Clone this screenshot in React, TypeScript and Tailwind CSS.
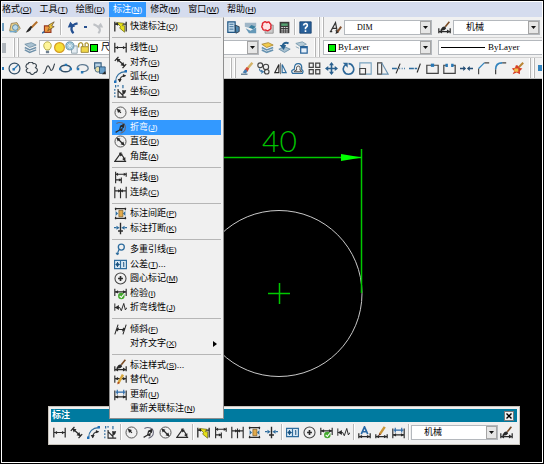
import type { ReactNode } from "react";

const K = "#2a2a2a";
const B = "#2f6d9e";

// All icons share a 16x16 grid
const icons: Record<string, ReactNode> = {
  linear: (
    <>
      <path d="M1 2v12M15 2v12M1 8h14" stroke={K} strokeWidth="1.5" />
      <path d="M1.5 8l3.5-2v4zM14.5 8L11 6v4z" fill={K} />
    </>
  ),
  aligned: (
    <>
      <path d="M1 6l4.5-5M10.5 15l4.5-5M4 4l9 8" stroke={K} strokeWidth="1.6" />
      <path d="M3 3l5 1-3.5 4zM13 12.5l-5-1 3.5-4z" fill={K} />
    </>
  ),
  arc: (
    <>
      <path d="M2 14C2 7 7 2 14 2" stroke={B} strokeWidth="1.4" />
      <path d="M7 14c0-4 3-7 7-7" stroke={K} strokeWidth="1.6" />
      <path d="M15 7l-4-2v4zM7 15l-2.5-4h5z" fill={K} />
      <path d="M0 13h3v3H0zM13 0h3v3h-3z" fill="#1f6fb8" />
    </>
  ),
  ordinate: (
    <>
      <path d="M5 5v10h10M5 7l5 5 4-4M11 6v9" stroke={K} strokeWidth="1.4" />
      <path d="M15 6l-5 1 3 4z" fill={K} />
      <path d="M1 5v2m0 2v2m0 2v2M4 1h2M11 0v4M2 0v3" stroke={B} strokeWidth="1.5" />
    </>
  ),
  radius: (
    <>
      <circle cx="8" cy="8" r="6.8" stroke="#555" strokeWidth="1.2" />
      <path d="M8.5 8.5L5 5" stroke={K} strokeWidth="1.6" />
      <path d="M3.5 3.5l5 1.5L5 8.5z" fill={K} />
    </>
  ),
  jogged: (
    <>
      <path d="M3 3c5-3 11 0 11 5 0 4-3 6-6 7" stroke="#667" strokeWidth="1.3" />
      <path d="M2 14l5-3 1-4 3-2" stroke={K} strokeWidth="1.5" />
      <path d="M13 3l-1 6-5-3zM11 8l-1 5-4-2z" fill={K} />
    </>
  ),
  diameter: (
    <>
      <circle cx="8" cy="8" r="6.8" stroke="#555" strokeWidth="1.2" />
      <path d="M4 4l8 8" stroke={K} strokeWidth="1.6" />
      <path d="M3 3l5 1.5L4.5 8zM13 13l-5-1.5L11.5 8z" fill={K} />
    </>
  ),
  angular: (
    <>
      <path d="M15 14H1L9 3M7 5c3 1 5 4 6 7" stroke={K} strokeWidth="1.4" />
      <path d="M6 3l5 2-3 3zM14 14l-4-3 4-2z" fill={K} />
    </>
  ),
  quick: (
    <>
      <path d="M1 2v12M15 2v12M1 5h14" stroke={K} strokeWidth="1.6" />
      <path d="M3 3l9 1-2 3h3v8L7 10l1-2z" fill="#e5df17" stroke="#62600c" strokeWidth=".8" />
      <path d="M1 5l4-2v4z" fill={K} />
    </>
  ),
  baseline: (
    <>
      <path d="M2 1v14M9 8v7M15 2v5M2 4h13M2 11h7" stroke={K} strokeWidth="1.4" />
      <path d="M2 4l3-2v4zM15 4l-3-2v4zM9 11l-3-2v4z" fill={K} />
    </>
  ),
  continued: (
    <>
      <path d="M1 1v14M8 3v12M15 1v14M1 6h14" stroke={K} strokeWidth="1.4" />
      <path d="M8 6L5 4v4zM8 6l3-2v4z" fill={K} />
    </>
  ),
  space: (
    <>
      <path d="M1 2h14M1 14h14M2 1v3M14 1v3M2 12v3M14 12v3" stroke={K} strokeWidth="1.5" />
      <path d="M2 5l3 3-3 3zM14 5l-3 3 3 3z" fill={B} />
      <path d="M6 4h5v8H6z" fill="#e2aa4b" stroke="#6f531e" strokeWidth=".8" />
    </>
  ),
  break: (
    <>
      <path d="M8 1v14M5 11h6" stroke={K} strokeWidth="1.7" />
      <path d="M0 7h3M13 7h3" stroke={B} strokeWidth="1.5" />
      <path d="M7 7L3 4.5v5zM9 7l4-2.5v5z" fill={B} />
    </>
  ),
  leader: (
    <>
      <circle cx="9" cy="5" r="3.7" stroke={B} strokeWidth="1.6" />
      <path d="M6 8l-2 6M2.5 12L4 14l2-1" stroke={B} strokeWidth="1.5" />
    </>
  ),
  tolerance: (
    <>
      <path d="M.7 3h14.6v10H.7zM8 3v10" fill="#d9e9f5" stroke={B} strokeWidth="1.4" />
      <circle cx="4.3" cy="8" r="1.7" stroke="#174f7d" />
      <path d="M2 8h5M4.3 5v6M11 6l1-.5V11" stroke="#174f7d" strokeWidth="1.2" />
    </>
  ),
  center: (
    <>
      <circle cx="8" cy="8" r="6.8" stroke="#444" strokeWidth="1.3" />
      <path d="M8 5v6M5 8h6" stroke={K} strokeWidth="2" />
    </>
  ),
  inspect: (
    <>
      <path d="M1 2v9M15 2v9M1 6h14" stroke={K} strokeWidth="1.4" />
      <path d="M1 6l4-2v4zM15 6l-4-2v4z" fill={K} />
      <circle cx="9" cy="11" r="4" fill="#43a82d" />
      <path d="M7 11l2 2 3-4" stroke="white" strokeWidth="1.3" />
    </>
  ),
  jogline: (
    <>
      <path d="M1 3v9M1 8h6l2 4 3-9 2 8 2-3" stroke={K} strokeWidth="1.2" />
      <path d="M1 8l5-3v6z" fill={K} />
    </>
  ),
  oblique: <path d="M1 14L5 2M11 14l4-12M3 8h10M6 6L3 8l2 2M11 6l2 2-3 2" stroke={K} strokeWidth="1.3" />,
  style: (
    <>
      <path d="M1 9v6M15 9v6M1 13h14" stroke={K} strokeWidth="1.5" />
      <path d="M1 13l4-2.5v5zM15 13l-4-2.5v5z" fill={K} />
      <path d="M3 11c2-4 4-5 6-4l1 2c-2 3-4 3-7 2z" fill={K} />
      <path d="M9 7l5-6" stroke="#7a4b24" strokeWidth="2" />
    </>
  ),
  override: (
    <>
      <path d="M1 3v9M15 3v9M1 7h14" stroke={K} strokeWidth="1.4" />
      <path d="M1 7l4-2v4zM15 7l-4-2v4z" fill={K} />
      <path d="M5 13l6-11" stroke="#d7a63d" strokeWidth="3" />
      <path d="M4 14l1-3 2 1z" fill="#a22c22" />
    </>
  ),
  update: (
    <>
      <path d="M1 3v12M15 3v12M1 11h14" stroke={K} strokeWidth="1.4" />
      <path d="M2 5h12M4 2v6M12 2v6" stroke="#2867a6" strokeWidth="1.4" />
      <path d="M1 11l4-2v4zM15 11l-4-2v4z" fill={K} />
    </>
  ),
  dimtext: (
    <>
      <path d="M4 10l4-9 4 9M5.5 7h5" stroke="#2868a6" strokeWidth="2" />
      <path d="M1 9v6M15 9v6M1 13h14" stroke={K} strokeWidth="1.5" />
      <path d="M1 13l4-2v4zM15 13l-4-2v4z" fill={K} />
    </>
  ),
  dimedit: (
    <>
      <path d="M1 10v5M15 10v5M1 13h14" stroke={K} strokeWidth="1.5" />
      <path d="M1 13l4-2v4zM15 13l-4-2v4z" fill={K} />
      <path d="M6 10l6-9" stroke="#c99436" strokeWidth="3" />
      <path d="M4.5 12L5 9l2.5 1.5z" fill="#7a2d16" />
    </>
  ),
  paste: (
    <>
      <path d="M2 12L4 3l7-1 4 7-5 5z" fill="#ecd38f" stroke="#8c7444" />
      <circle cx="9" cy="8" r="3.5" fill="#b9d9ed" stroke="#4a7b98" />
      <path d="M2 13h9" stroke="#70a9cc" strokeWidth="2" />
    </>
  ),
  brush: (
    <>
      <path d="M15 1L8 8" stroke="#b3702b" strokeWidth="2.4" />
      <path d="M9 7L7 11c-2 2-4 3-6 3 2-3 3-5 6-8z" fill="#262626" />
    </>
  ),
  match: (
    <>
      <path d="M3 6h8v8H3z" fill="#ef9a3e" stroke="#963c24" strokeWidth="1.4" />
      <path d="M8 5l7-4-3 5 3 1-8 5 2-4z" fill="#e9c33d" stroke="#583f20" strokeWidth=".8" />
      <path d="M0 15l3-2" stroke="#356b9d" strokeWidth="2" />
    </>
  ),
  undo: (
    <>
      <path d="M8 15C4 11 4 5 13 3" stroke="#234f91" strokeWidth="2.7" />
      <path d="M1 8l3-7 6 6z" fill="#234f91" />
    </>
  ),
  redo: (
    <>
      <path d="M9 15c4-4 2-8-6-11" stroke="#bfc2c6" strokeWidth="2.5" />
      <path d="M15 8l-3-6-5 6z" fill="#bfc2c6" />
    </>
  ),
  palette: (
    <>
      <path d="M1 1h9v13H1z" fill="#c4dced" stroke="#215785" strokeWidth="1.5" />
      <path d="M3 4h5M3 7h5M3 10h5" stroke="#215785" />
      <path d="M10 5l5 2v6l-4 2z" fill="#4e89b2" stroke="#234" />
    </>
  ),
  sheet: (
    <>
      <path d="M1 2h14v4L8 9 1 7z" fill="#9fb6c7" />
      <path d="M2 9l6 3 7-4v7H6z" fill="#6699b8" />
      <path d="M9 5l6 2-4 3-5-2z" fill="#3a7f9e" />
    </>
  ),
  markup: (
    <>
      <path d="M5 5h10v10H5z" fill="#ccc" stroke="#888" />
      <path d="M3 2q2-2 4 0 3-2 4 1 2 1 1 4 1 3-2 4-2 2-4 0-4 1-4-2-2-2 0-4-1-2 1-3z" fill="#ffe4e4" stroke="#df2630" strokeWidth="1.7" />
    </>
  ),
  calc: (
    <>
      <path d="M2 1h12v14H2z" fill="#3b3b3b" />
      <path d="M4 3h8v3H4z" fill="#55a070" />
      <path d="M4 8h2m1 0h2m1 0h2M4 11h2m1 0h2m1 0h2M4 13.5h2m1 0h2m1 0h2" stroke="#ddd" strokeWidth="1.4" />
    </>
  ),
  help: (
    <>
      <path d="M1 1h14v14H1z" fill="#28609a" stroke="#153e6c" />
      <path d="M5.5 5.5Q6 3 8.5 3.2 11 4 10 6.5L8 8.5V10M8 11.5v2" stroke="white" strokeWidth="2" />
    </>
  ),
  textstyle: (
    <>
      <path d="M2 13L8 2l2 10M4 9h5M1 13h3M8 12h4" stroke="#333" strokeWidth="1.5" />
      <path d="M10 14l5-7" stroke="#825130" strokeWidth="2.4" />
      <path d="M8 16l1-4 3 2z" fill={K} />
    </>
  ),
  layers: (
    <>
      <path d="M1 4l8-2 6 3-8 3z" fill="#a9c2d2" stroke="#6c8ca1" />
      <path d="M1 8l6 3 8-3M1 11l6 3 8-3" stroke="#6f91aa" strokeWidth="1.8" />
    </>
  ),
  layersGold: (
    <>
      <path d="M1 4l8-2 6 3-8 3z" fill="#f1cb4d" stroke="#a7822c" />
      <path d="M1 8l6 3 8-3M1 11l6 3 8-3" stroke="#6793b1" strokeWidth="2" />
    </>
  ),
  layerPrev: (
    <>
      <path d="M1 10l7-3 7 3-7 4z" fill="#a8c1d0" stroke="#648ca6" />
      <path d="M6 8C5 3 9 1 13 3" stroke="#28618f" strokeWidth="2.4" />
      <path d="M2 5l5 6 3-6z" fill="#28618f" />
    </>
  ),
  layerState: (
    <>
      <path d="M1 3l8-2 5 3-7 3zM1 7l4 2" fill="#b4cad7" stroke="#7799ad" />
      <path d="M7 7h8v8H7z" fill="#e6f0fa" stroke="#286399" strokeWidth="1.5" />
      <path d="M7 8h8" stroke="#286399" strokeWidth="2" />
    </>
  ),
  bulb: (
    <>
      <path d="M6 11C1 6 4 1 8 1s7 5 2 10z" fill="#fff59a" stroke="#a49a2e" />
      <path d="M6 12h4v3H6z" fill="#6d7f91" />
    </>
  ),
  sun: <circle cx="8" cy="8" r="6" fill="#f6df38" stroke="#d59c23" strokeWidth="1.5" />,
  vpfreeze: (
    <>
      <path d="M8 6h7v9H8z" fill="#e5edf3" stroke="#8497a3" />
      <circle cx="6" cy="6" r="5" fill="#8bb9cf" stroke="#6a91a8" />
      <path d="M2 6h8M6 2v8M3 3l6 6M9 3l-6 6" stroke="#e4f0f5" />
    </>
  ),
  lock: (
    <>
      <path d="M2 8V4q3-4 5 0v3" stroke="#ad9636" strokeWidth="1.7" />
      <path d="M5 7h9v7H5z" fill="#f0d649" stroke="#917b29" />
      <path d="M10 6V3q2-2 4 1v3" stroke="#ad9636" strokeWidth="1.5" />
    </>
  ),
  circle: (
    <>
      <circle cx="8" cy="8" r="6.7" stroke="#344f66" strokeWidth="1.5" />
      <path d="M7 9l5-5" stroke="#2777b5" strokeWidth="1.5" />
      <path d="M5.5 7.5h3v3h-3z" fill="#2777b5" />
    </>
  ),
  cloud: <path d="M3 8C0 7 1 2 4 2c1-3 6-2 6 0 4-1 5 3 3 5 4 2 2 6-1 6-2 4-6 2-6 0-4 1-6-3-3-5z" stroke="#39444d" strokeWidth="1.4" />,
  spline: <path d="M1 14C5 15 5 3 8 5c3 3 2 8 5 4 2-3 1-5 3-7" stroke="#39444d" strokeWidth="1.4" />,
  ellipse: (
    <>
      <ellipse cx="8" cy="8" rx="6.5" ry="4" stroke="#344f66" strokeWidth="1.7" />
      <path d="M0 7h3v3H0zM13 7h3v3h-3zM7 2h3v3H7z" fill="#2777b5" />
    </>
  ),
  ellarc: (
    <>
      <path d="M2 9C-1 2 15 1 15 8c0 2-3 4-7 4" stroke="#5e7a92" strokeWidth="1.7" />
      <path d="M1 7h3v3H1zM6 11h3v3H6z" fill="#2777b5" />
    </>
  ),
  block: (
    <>
      <path d="M2 1h8v7H2z" fill="#b9d3e6" stroke="#355e80" strokeWidth="1.4" />
      <circle cx="6" cy="9" r="3.5" fill="#e7dfa9" stroke="#355e80" />
      <path d="M8 6h7v8H8z" fill="#6aa1cb" stroke="#244e72" />
      <path d="M11 15h5l-1-4z" fill={K} />
    </>
  ),
  erase: (
    <>
      <path d="M14 1L8 8" stroke="#d2b267" strokeWidth="3" />
      <path d="M7 6l3 2-2 4-4-2z" fill="#d64a37" />
      <path d="M0 15h8" stroke="#43627c" strokeWidth="1.4" />
      <path d="M5 9l3 2-2 3-4-1z" fill="#447db1" />
    </>
  ),
  copy: (
    <>
      <circle cx="4" cy="4" r="3" stroke="#444" strokeWidth="1.4" />
      <circle cx="11" cy="6" r="3.3" stroke="#444" strokeWidth="1.4" />
      <path d="M3 8c0 3 1 4 4 4M5 10l3 2-3 2" stroke="#447ca9" strokeWidth="1.4" />
      <circle cx="12" cy="12" r="2.8" stroke="#444" strokeWidth="1.4" />
    </>
  ),
  mirror: (
    <>
      <path d="M6 3v10H1z" stroke={K} strokeWidth="1.4" />
      <path d="M10 3v10h5z" stroke={B} strokeWidth="1.4" />
      <path d="M8 1v14" stroke="#666" />
    </>
  ),
  offset: (
    <>
      <path d="M2 14q-3-4 2-5 0-8 6-7 4 1 3 7 3 2 1 5z" stroke="#2f6d9e" strokeWidth="1.5" />
      <path d="M4 12q0-2 3-2-1-5 2-5t2 5q2 0 2 2z" stroke={K} />
    </>
  ),
  array: <path d="M1.5 1.5h5v5h-5zM9.5 1.5h5v5h-5zM1.5 9.5h5v5h-5zM9.5 9.5h5v5h-5z" stroke="#444" strokeWidth="1.5" />,
  move: (
    <>
      <path d="M8 2v12M2 8h12" stroke="#285f8e" strokeWidth="2" />
      <path d="M8 0l3 4H5zM8 16l3-4H5zM0 8l4-3v6zM16 8l-4-3v6z" fill="#285f8e" />
    </>
  ),
  rotate: (
    <>
      <path d="M5 3c-7 5-2 12 3 12 6 0 8-6 5-10-1-2-3-3-5-3" stroke="#2d6798" strokeWidth="2" />
      <path d="M1 1h6v6z" fill="#2d6798" />
    </>
  ),
  scale: (
    <>
      <path d="M1 1h14v14H1z" stroke="#78a2bf" strokeWidth="1.4" />
      <path d="M1 8h7v7H1z" fill="#f4f4f4" stroke="#444" strokeWidth="1.4" />
    </>
  ),
  stretch: (
    <>
      <path d="M2 1h5v14H2z" stroke="#444" strokeWidth="1.4" />
      <path d="M7 1l8 14H7" stroke="#6992b2" strokeWidth="1.4" />
    </>
  ),
  trim: (
    <>
      <path d="M0 8h6M9 8h1m2 0h1m2 0h1" stroke={B} strokeWidth="1.7" />
      <path d="M5 14L10 2" stroke={K} strokeWidth="1.4" />
    </>
  ),
  extend: (
    <>
      <path d="M0 8h6m1 0h3" stroke={B} strokeWidth="1.7" />
      <path d="M10 13l4-11" stroke={K} strokeWidth="1.4" />
    </>
  ),
  breakpt: (
    <>
      <path d="M1 4h14v10H1z" stroke="#444" strokeWidth="1.5" />
      <path d="M6 2h4v4H6z" fill="#2777b5" />
    </>
  ),
  breakgap: (
    <>
      <path d="M4 4H1v10h14V4h-3" stroke="#444" strokeWidth="1.5" />
      <path d="M3 2h3v4H3zM10 2h3v4h-3z" fill="#2777b5" />
    </>
  ),
  join: (
    <>
      <path d="M0 8h6M10 8h6" stroke="#244e75" strokeWidth="2" />
      <path d="M7.5 8L4 5v6zM8.5 8L12 5v6z" fill="#244e75" />
    </>
  ),
  chamfer: (
    <>
      <path d="M2 15V8M9 1h6" stroke="#444" strokeWidth="1.4" />
      <path d="M2 8l7-7" stroke="#3284be" strokeWidth="1.5" />
    </>
  ),
  fillet: (
    <>
      <path d="M2 15V9M10 1h5" stroke="#444" strokeWidth="1.5" />
      <path d="M2 9c0-5 3-8 8-8" stroke="#3284be" strokeWidth="2" />
    </>
  ),
  explode: (
    <>
      <path d="M15 1L9 7" stroke="#b98535" strokeWidth="2.5" />
      <path d="M8 4l2 3 4 1-3 3v4l-4-2-5 2 2-4-3-3 4-1 1-3z" fill="#d73e26" />
      <path d="M4 8h5v4H4z" fill="#f0c14c" />
    </>
  ),
};

function Icon({ name }: { name: string }) {
  return (
    <svg viewBox="0 0 16 16" fill="none" className="h-[13px] w-[13px] shrink-0" aria-hidden="true">
      {icons[name]}
    </svg>
  );
}

function Tool({ name }: { name: string }) {
  return (
    <button type="button" aria-label={name} className="flex h-4 w-[17px] shrink-0 items-center justify-center">
      <Icon name={name} />
    </button>
  );
}

function Grip() {
  return (
    <span className="flex h-full w-[13px] shrink-0 justify-center gap-[2px]">
      <span className="w-[2px] border-r border-[#b5b5b5] bg-white" />
      <span className="w-[2px] border-r border-[#b5b5b5] bg-white" />
    </span>
  );
}

function Divider() {
  return <span className="mx-px h-4 w-[2px] shrink-0 border-l border-[#b9b9b9] bg-white" />;
}

function Arrow() {
  return (
    <span className="pointer-events-none flex h-[13px] w-[11px] shrink-0 items-center justify-center border border-[#a5a5a5] bg-[#e6e6e6]">
      <svg viewBox="0 0 5 3" className="h-[3px] w-[5px]">
        <path d="M0 0h5L2.5 3z" fill="#111" />
      </svg>
    </span>
  );
}

type ComboProps = { label: string; value: string; className: string; selectClass: string; children?: ReactNode };

function Combo({ label, value, className, selectClass, children }: ComboProps) {
  return (
    <div className={`flex h-[15px] shrink-0 items-center border border-[#b4b8bd] bg-white ${className}`}>
      {children}
      <select
        aria-label={label}
        className={`h-[13px] min-w-0 flex-1 appearance-none bg-transparent leading-[13px] text-black outline-none ${selectClass}`}
      >
        <option>{value}</option>
      </select>
      <Arrow />
    </div>
  );
}

type Item = { icon?: string; text: string; k: string; tail?: string; active?: boolean; sub?: boolean };

const groups: Item[][] = [
  [{ icon: "quick", text: "快速标注", k: "Q" }],
  [
    { icon: "linear", text: "线性", k: "L" },
    { icon: "aligned", text: "对齐", k: "G" },
    { icon: "arc", text: "弧长", k: "H" },
    { icon: "ordinate", text: "坐标", k: "O" },
  ],
  [
    { icon: "radius", text: "半径", k: "R" },
    { icon: "jogged", text: "折弯", k: "J", active: true },
    { icon: "diameter", text: "直径", k: "D" },
    { icon: "angular", text: "角度", k: "A" },
  ],
  [
    { icon: "baseline", text: "基线", k: "B" },
    { icon: "continued", text: "连续", k: "C" },
  ],
  [
    { icon: "space", text: "标注间距", k: "P" },
    { icon: "break", text: "标注打断", k: "K" },
  ],
  [
    { icon: "leader", text: "多重引线", k: "E" },
    { icon: "tolerance", text: "公差", k: "T", tail: "..." },
    { icon: "center", text: "圆心标记", k: "M" },
    { icon: "inspect", text: "检验", k: "I" },
    { icon: "jogline", text: "折弯线性", k: "J" },
  ],
  [
    { icon: "oblique", text: "倾斜", k: "F" },
    { text: "对齐文字", k: "X", sub: true },
  ],
  [
    { icon: "style", text: "标注样式", k: "S", tail: "..." },
    { icon: "override", text: "替代", k: "V" },
    { icon: "update", text: "更新", k: "U" },
    { text: "重新关联标注", k: "N" },
  ],
];

const menus = [
  ["格式", "O"],
  ["工具", "T"],
  ["绘图", "D"],
  ["标注", "N"],
  ["修改", "M"],
  ["窗口", "W"],
  ["帮助", "H"],
];

function Label({ text, k, tail }: { text: string; k: string; tail?: string }) {
  return (
    <span className="whitespace-nowrap">
      {text}
      <span className="text-[8px]">
        (<u>{k}</u>)
      </span>
      {tail}
    </span>
  );
}

function DimensionMenu() {
  return (
    <div className="absolute top-full left-0 z-20 flex h-[402px] w-[115px] flex-col border border-[#8f8f8f] border-t-[#e4e4e4] bg-[#f0f0f0] px-[2px] pt-px pb-[2px] text-black">
      {groups.map((group, i) => (
        <div key={i} className="contents">
          {i > 0 && (
            <div className="flex h-[7px] shrink-0 items-center">
              <hr className="w-full border-[#b6b6b6]" />
            </div>
          )}
          {group.map((item) => (
            <button
              key={item.text}
              type="button"
              className={`flex min-h-0 flex-1 items-center gap-[3px] pr-1 pl-[2px] text-left ${item.active ? "bg-[#3399ff] text-white" : ""}`}
            >
              <span className="flex w-[13px] shrink-0">{item.icon && <Icon name={item.icon} />}</span>
              <Label text={item.text} k={item.k} tail={item.tail} />
              {item.sub && (
                <svg viewBox="0 0 4 6" className="ml-auto h-[6px] w-1">
                  <path d="M0 0l4 3-4 3z" fill="black" />
                </svg>
              )}
            </button>
          ))}
        </div>
      ))}
    </div>
  );
}

function MenuBar() {
  return (
    <nav className="flex h-[15px] bg-[#d5dcee]">
      <div className="-ml-1 flex">
        {menus.map(([text, k]) => {
          const open = k === "N";
          return (
            <div key={k} className="relative">
              <button type="button" className={`flex h-[15px] items-center px-1 ${open ? "bg-[#3399ff] text-white" : ""}`}>
                <Label text={text} k={k} />
              </button>
              {open && <DimensionMenu />}
            </div>
          );
        })}
      </div>
    </nav>
  );
}

const modifyTools = [
  "erase", "copy", "mirror", "offset", "array", "move", "rotate", "scale", "stretch",
  "trim", "extend", "breakpt", "breakgap", "join", "chamfer", "fillet", "explode",
];

function Toolbars() {
  return (
    <div className="bg-[#f1f1f1]">
      <div className="flex h-[21px] items-center overflow-hidden border-b border-[#d2d2d2]">
        <div className="flex w-[223px] shrink-0 items-center">
          <span className="mr-[2px] h-2 w-[2px] bg-[#6d9cbd]" />
          <Tool name="paste" />
          <Tool name="brush" />
          <Tool name="match" />
          <span className="mx-[3px] h-4 w-[2px] shrink-0 border-l border-[#b9b9b9] bg-white" />
          <Tool name="undo" />
          <span className="mx-[2px] h-[2px] w-[3px] bg-[#27508f]" />
          <Tool name="redo" />
        </div>
        <Tool name="palette" />
        <Tool name="sheet" />
        <Tool name="markup" />
        <Tool name="calc" />
        <Divider />
        <Tool name="help" />
        <Grip />
        <Tool name="textstyle" />
        <Combo label="文字样式" value="DIM" className="mr-1 w-[88px]" selectClass="pl-3 font-['Liberation_Serif','Noto_Sans_CJK_SC',serif] text-[8px]" />
        <Tool name="style" />
        <Combo label="标注样式" value="机械" className="w-[87px]" selectClass="pl-3 text-[9px]" />
      </div>

      <div className="flex h-5 items-center overflow-hidden border-b border-[#d2d2d2]">
        <span className="mr-[3px] h-[10px] w-1 shrink-0 bg-[#aeb4ba]" />
        <Grip />
        <Tool name="layers" />
        <Combo label="图层" value="尺寸" className="w-[220px]" selectClass="pl-[3px] text-[9px]">
          <span className="flex pl-px">
            <span className="flex w-3"><Icon name="bulb" /></span>
            <span className="flex w-3"><Icon name="sun" /></span>
            <span className="flex w-3"><Icon name="vpfreeze" /></span>
            <span className="flex w-3"><Icon name="lock" /></span>
          </span>
          <span className="ml-px h-2 w-2 shrink-0 border border-black bg-[#00f000]" />
        </Combo>
        <Tool name="layersGold" />
        <Tool name="layerPrev" />
        <Tool name="layerState" />
        <Grip />
        <Combo label="颜色" value="ByLayer" className="mr-[6px] w-[109px]" selectClass="pl-[2px] font-['Liberation_Serif','Noto_Sans_CJK_SC',serif] text-[9px]">
          <span className="ml-1 h-2 w-2 shrink-0 border border-black bg-[#00f000]" />
        </Combo>
        <Combo label="线型" value="ByLayer" className="w-[160px]" selectClass="pl-[3px] font-['Liberation_Serif','Noto_Sans_CJK_SC',serif] text-[9px]">
          <span className="ml-[2px] h-px w-11 shrink-0 bg-black" />
        </Combo>
      </div>

      <div className="flex h-[21px] items-center overflow-hidden border-b border-[#c4c4c4]">
        <div className="flex w-[224px] shrink-0 items-center">
          <span className="mr-[2px] h-[3px] w-[2px] bg-[#2777b5]" />
          <Tool name="circle" />
          <Tool name="cloud" />
          <Tool name="spline" />
          <Tool name="ellipse" />
          <Tool name="ellarc" />
          <Tool name="block" />
        </div>
        <Grip />
        <div className="flex w-[286px] shrink-0 justify-between">
          {modifyTools.map((name) => (
            <button key={name} type="button" aria-label={name} className="flex h-4 w-4 items-center justify-center">
              <Icon name={name} />
            </button>
          ))}
        </div>
        <Grip />
        <span className="h-[6px] w-1 bg-[#3284be]" />
      </div>
    </div>
  );
}

function Drawing() {
  return (
    <svg className="block h-full w-full" fill="none">
      <circle cx="277" cy="214.5" r="83" stroke="#c9c9c9" />
      <path d="M266 214.5h22M277.5 204v21" stroke="#00c800" strokeWidth="1.5" />
      <path d="M200 78.5h160M359.5 70v144" stroke="#00c800" strokeWidth="1.5" />
      <path d="M339 75l21 3.5-21 3.5z" fill="#00ff00" />
      <text x="260" y="73" fontSize="30" fill="#00c000" className="font-['Lato',sans-serif] font-light">
        40
      </text>
    </svg>
  );
}

const dimTools = [
  ["linear", "aligned", "arc", "ordinate"],
  ["radius", "jogged", "diameter", "angular"],
  ["quick", "baseline", "continued", "space", "break"],
  ["tolerance", "center", "inspect", "jogline"],
  ["dimtext", "dimedit", "update"],
];

function DimensionPanel() {
  return (
    <section className="absolute right-[22px] bottom-[17px] left-[46px] border border-[#c8c4bc] bg-[#f0f0f0] p-[2px]">
      <header className="flex h-[13px] items-center justify-between bg-[#007a9f] pr-[3px] pl-px">
        <h2 className="text-[9px] leading-[13px] font-bold text-white">标注</h2>
        <button type="button" aria-label="关闭" className="flex h-[10px] w-[10px] items-center justify-center border border-[#777] bg-[#f0f0f0]">
          <svg viewBox="0 0 6 6" className="h-[6px] w-[6px]">
            <path d="M.5.5l5 5M5.5.5l-5 5" stroke="black" strokeWidth="1.4" />
          </svg>
        </button>
      </header>
      <div className="flex h-5 items-center">
        {dimTools.map((tools, i) => (
          <div key={i} className="flex items-center">
            {tools.map((name) => (
              <Tool key={name} name={name} />
            ))}
            <Divider />
          </div>
        ))}
        <Combo label="当前标注样式" value="机械" className="w-[87px]" selectClass="pl-3 text-[9px]" />
        <Tool name="style" />
      </div>
    </section>
  );
}

export default function App() {
  return (
    <div className="flex min-h-screen bg-black p-px font-['Liberation_Sans','Noto_Sans_CJK_SC',sans-serif] text-[9px] leading-[13px]">
      <main className="flex min-w-0 flex-1 flex-col border border-white">
        <MenuBar />
        <Toolbars />
        <div className="relative flex-1 bg-black">
          <div className="absolute inset-0">
            <Drawing />
          </div>
          <DimensionPanel />
        </div>
      </main>
    </div>
  );
}
